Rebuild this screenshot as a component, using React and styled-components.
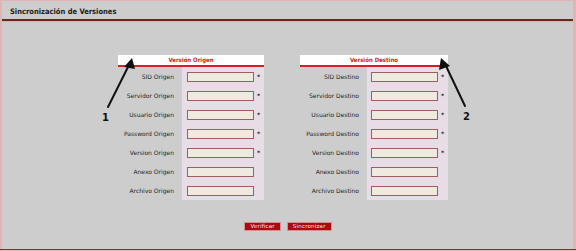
import React from "react";
import styled, { createGlobalStyle } from "styled-components";

const Global = createGlobalStyle`
  html, body { margin: 0; padding: 0; background: #cdcdcd; }
  * { box-sizing: border-box; }
`;

const Frame = styled.div`
  position: relative;
  width: 576px;
  height: 251px;
  background: #cdcdcd;
  box-shadow: inset 0 -1px 0 #e4b3b3, inset 0 -2px 0 #8c2a31, inset 2px 1px 0 #e4b3b3, inset -3px 0 0 #e4b3b3;
  font-family: "DejaVu Sans", Verdana, sans-serif;
  display: flex;
  flex-direction: column;
  overflow: hidden;
`;

const TitleBar = styled.div`
  margin: 1px 3px 0 2px;
  height: 20px;
  padding: 6px 0 0 8px;
  font-family: "DejaVu Sans Condensed", "DejaVu Sans", sans-serif;
  font-weight: bold;
  font-size: 7.5px;
  color: #1b1b1b;
  border-bottom: 2px solid #7b1c24;
  box-shadow: 0 1px 0 #e3aeb0;
`;

const Main = styled.div`
  display: flex;
  justify-content: center;
  gap: 36px;
  padding: 34px 10px 0 0;
`;

const Panel = styled.div`
  width: ${(p) => p.$w}px;
  display: flex;
  flex-direction: column;
`;

const PanelHeader = styled.div`
  height: 12px;
  background: #ffffff;
  border-bottom: 2px solid #d81e26;
  color: #d31a22;
  font-family: "DejaVu Sans Condensed", "DejaVu Sans", sans-serif;
  font-weight: bold;
  font-size: 6px;
  line-height: 10px;
  text-align: center;
`;

const Row = styled.div`
  display: grid;
  grid-template-columns: ${(p) => p.$label}px 1fr;
  height: 19px;
`;

const Label = styled.div`
  display: flex;
  align-items: center;
  justify-content: flex-end;
  padding-right: 8px;
  font-size: 6px;
  color: #1f1f1f;
`;

const Cell = styled.div`
  background: #e7dde6;
  display: flex;
  align-items: center;
  padding-left: ${(p) => p.$pad}px;
  gap: 3px;
`;

const Field = styled.input`
  width: ${(p) => p.$w}px;
  height: 10px;
  border: 1px solid #a15c62;
  background: #eeeadf;
  padding: 0;
  margin: 0;
  outline: none;
`;

const Star = styled.span`
  font-size: 6px;
  font-weight: bold;
  color: #222;
  line-height: 1;
`;

const Buttons = styled.div`
  display: flex;
  justify-content: center;
  gap: 6px;
  margin-top: 22px;
`;

const Button = styled.button`
  height: 9px;
  padding: 0 5px;
  background: #a90b0e;
  color: #f5e8e8;
  border: 1px solid #d98f92;
  font-family: "DejaVu Sans", Verdana, sans-serif;
  font-size: 5.5px;
  line-height: 7px;
  letter-spacing: 0.2px;
  cursor: pointer;
`;

const Overlay = styled.svg`
  position: absolute;
  left: 0;
  top: 0;
  pointer-events: none;
`;

const origen = [
  ["SID Origen", true],
  ["Servidor Origen", true],
  ["Usuario Origen", true],
  ["Password Origen", true],
  ["Version Origen", true],
  ["Anexo Origen", false],
  ["Archivo Origen", false],
];

const destino = [
  ["SID Destino", true],
  ["Servidor Destino", true],
  ["Usuario Destino", true],
  ["Password Destino", true],
  ["Version Destino", true],
  ["Anexo Destino", false],
  ["Archivo Destino", false],
];

function FormPanel({ title, rows, width, label, pad, field }) {
  return (
    <Panel $w={width}>
      <PanelHeader>{title}</PanelHeader>
      {rows.map(([name, req]) => (
        <Row key={name} $label={label}>
          <Label>{name}</Label>
          <Cell $pad={pad}>
            <Field $w={field} />
            {req && <Star>*</Star>}
          </Cell>
        </Row>
      ))}
    </Panel>
  );
}

export default function App() {
  return (
    <>
      <Global />
      <Frame>
        <TitleBar>Sincronización de Versiones</TitleBar>
        <Main>
          <FormPanel title="Versión Origen" rows={origen} width={146} label={64} pad={5} field={67} />
          <FormPanel title="Versión Destino" rows={destino} width={148} label={67} pad={4} field={67} />
        </Main>
        <Buttons>
          <Button>Verificar</Button>
          <Button>Sincronizar</Button>
        </Buttons>
        <Overlay width="576" height="251" viewBox="0 0 576 251">
          <g stroke="#111" strokeWidth="2" fill="#111" strokeLinecap="round">
            <line x1="108" y1="107" x2="129" y2="65" />
            <polygon points="132,58 124,67 135,69" stroke="none" />
            <line x1="465" y1="106" x2="446" y2="66" />
            <polygon points="441,58 439,70 450,66" stroke="none" />
          </g>
          <g fontFamily="'DejaVu Sans', sans-serif" fontWeight="bold" fontSize="10" fill="#111">
            <text x="102" y="121">1</text>
            <text x="463" y="120">2</text>
          </g>
        </Overlay>
      </Frame>
    </>
  );
}
